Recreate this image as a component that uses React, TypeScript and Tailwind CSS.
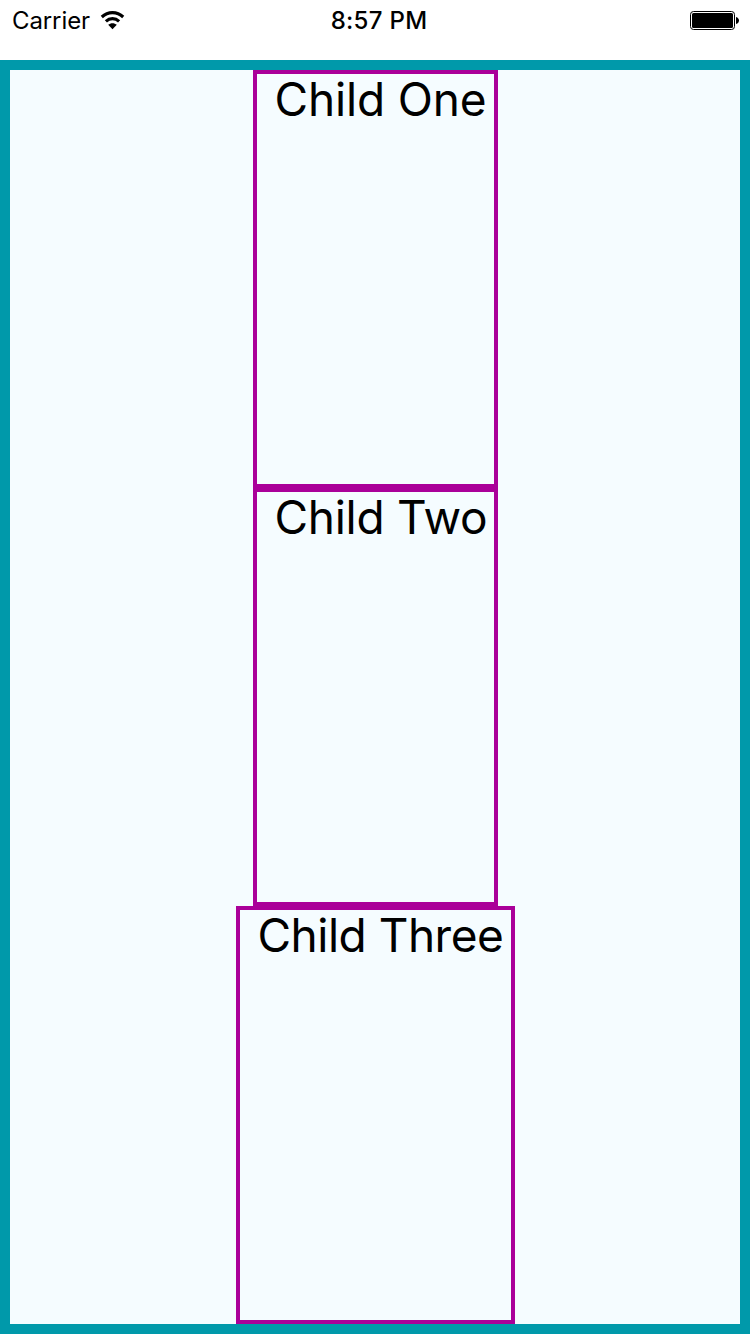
const items = [
  { label: 'Child One', box: 'w-[245px]', text: 'tracking-[-0.15px]' },
  { label: 'Child Two', box: 'w-[245px]', text: 'tracking-[-0.3px]' },
  { label: 'Child Three', box: 'w-[279px]', text: 'tracking-[-0.5px]' },
];

function Wifi() {
  return (
    <svg className="ml-[10px]" width="26" height="20" viewBox="0 0 26 20">
      <g fill="none" stroke="#000" strokeWidth="3.1">
        <path d="M1.8 6C8 0.2 17 0.2 23.2 6" />
        <path d="M5.9 10.3C9.7 6.7 15.3 6.7 19.1 10.3" />
      </g>
      <path d="M12.5 18.2l-4.3-4.4c2.4-2.2 6.2-2.2 8.6 0z" />
    </svg>
  );
}

function Battery() {
  return (
    <svg width="50" height="20" viewBox="0 0 50 20">
      <rect x="0.5" y="0.5" width="44" height="18" rx="3" fill="none" stroke="#000" />
      <rect x="2" y="2" width="41" height="15" rx="1.5" />
      <path d="M46 6c4 1 4 6 0 7z" />
    </svg>
  );
}

export default function App() {
  return (
    <div className="flex h-[1334px] w-[750px] flex-col bg-white font-['Inter',sans-serif] text-black">
      <header className="grid h-[60px] grid-cols-3 pt-px pr-[10px] pl-[12px] text-[24px] leading-[40px]">
        <div className="flex h-[40px] items-center">
          <span className="w-[78px] tracking-[-0.1px] whitespace-nowrap">Carrier</span>
          <Wifi />
        </div>
        <span className="h-[40px] pl-[6px] text-center font-medium tracking-[0.3px] whitespace-nowrap">8:57 PM</span>
        <div className="flex h-[40px] items-center justify-end">
          <Battery />
        </div>
      </header>
      <main className="flex flex-1 flex-col items-center border-10 border-[#0099aa] bg-[#f5fcff]">
        {items.map((item) => (
          <section key={item.label} className={`flex flex-1 border-4 border-[#aa0099] pl-[18px] ${item.box}`}>
            <span className={`h-[50px] text-[46px] leading-[50px] whitespace-nowrap ${item.text}`}>
              {item.label}
            </span>
          </section>
        ))}
      </main>
    </div>
  );
}
